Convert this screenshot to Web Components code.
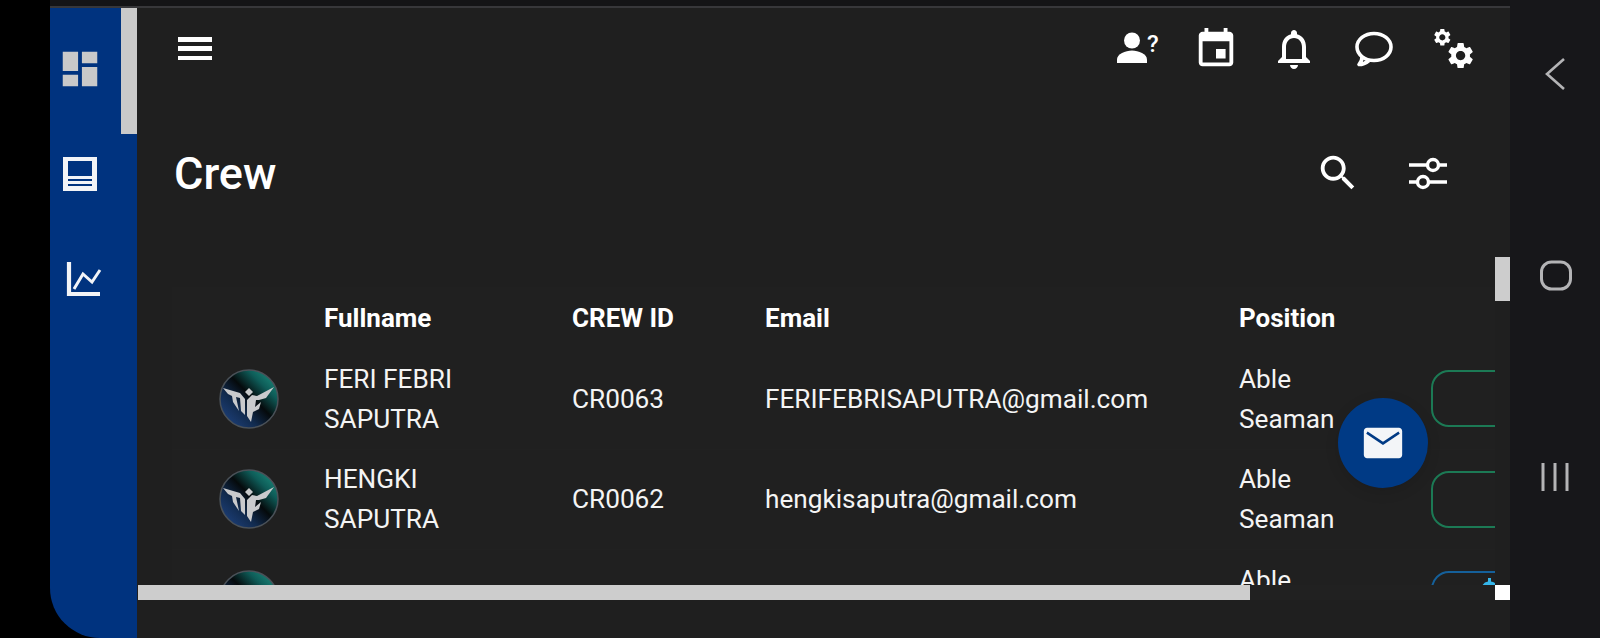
<!DOCTYPE html>
<html>
<head>
<meta charset="utf-8">
<title>Crew</title>
<style>
  html, body { margin: 0; height: 638px; overflow: hidden; background: #000; }
  body { display: flex; font-family: Roboto, "Liberation Sans", sans-serif; color: #fff; }
</style>
</head>
<body>
<app-frame>
  <side-rail slot="rail"></side-rail>
  <top-bar></top-bar>
  <page-title>Crew</page-title>
  <crew-table>
    <crew-row name="FERI FEBRI SAPUTRA" crew="CR0063" email="FERIFEBRISAPUTRA@gmail.com" position="Able Seaman"></crew-row>
    <crew-row name="HENGKI SAPUTRA" crew="CR0062" email="hengkisaputra@gmail.com" position="Able Seaman"></crew-row>
    <crew-row name="" crew="" email="" position="Able Seaman" tone="blue"></crew-row>
  </crew-table>
  <mail-fab slot="over"></mail-fab>
</app-frame>
<phone-nav></phone-nav>

<script>
const ICONS = {
  dashboard: '<path d="M3 13h8V3H3v10zm0 8h8v-6H3v6zm10 0h8V11h-8v10zm0-18v6h8V3h-8z"/>',
  event: '<path d="M17 12h-5v5h5v-5zM16 1v2H8V1H6v2H5c-1.11 0-1.99.9-1.99 2L3 19c0 1.1.89 2 2 2h14c1.1 0 2-.9 2-2V5c0-1.1-.9-2-2-2h-1V1h-2zm3 18H5V8h14v11z"/>',
  bell: '<path d="M12 22c1.1 0 2-.9 2-2h-4c0 1.1.9 2 2 2zm6-6v-5c0-3.07-1.63-5.64-4.5-6.32V4c0-.83-.67-1.5-1.5-1.5s-1.5.67-1.5 1.5v.68C7.64 5.36 6 7.92 6 11v5l-2 2v1h16v-1l-2-2zm-2 1H8v-6c0-2.48 1.51-4.5 4-4.5s4 2.02 4 4.5v6z"/>',
  search: '<path d="M15.5 14h-.79l-.28-.27C15.41 12.59 16 11.11 16 9.5 16 5.91 13.09 3 9.5 3S3 5.91 3 9.5 5.91 16 9.5 16c1.61 0 3.09-.59 4.23-1.57l.27.28v.79l5 4.99L20.49 19l-4.99-5zm-6 0C7.01 14 5 11.99 5 9.5S7.01 5 9.5 5 14 7.01 14 9.5 11.99 14 9.5 14z"/>'
};
const GEAR = 'M19.14 12.94c.04-.3.06-.61.06-.94 0-.32-.02-.64-.07-.94l2.03-1.58c.18-.14.23-.41.12-.61l-1.92-3.32c-.12-.22-.37-.29-.59-.22l-2.39.96c-.5-.38-1.03-.7-1.62-.94l-.36-2.54c-.04-.24-.24-.41-.48-.41h-3.84c-.24 0-.43.17-.47.41l-.36 2.54c-.59.24-1.13.57-1.62.94l-2.39-.96c-.22-.08-.47 0-.59.22L2.74 8.87c-.12.21-.08.47.12.61l2.03 1.58c-.05.3-.09.63-.09.94s.02.64.07.94l-2.03 1.58c-.18.14-.23.41-.12.61l1.92 3.32c.12.22.37.29.59.22l2.39-.96c.5.38 1.03.7 1.62.94l.36 2.54c.05.24.24.41.48.41h3.84c.24 0 .44-.17.47-.41l.36-2.54c.59-.24 1.13-.56 1.62-.94l2.39.96c.22.08.47 0 .59-.22l1.92-3.32c.12-.22.07-.47-.12-.61l-2.01-1.58zM12 15.6c-1.98 0-3.6-1.62-3.6-3.6s1.62-3.6 3.6-3.6 3.6 1.62 3.6 3.6-1.62 3.6-3.6 3.6z';

function icon(name, size, colour) {
  return `<svg width="${size}" height="${size}" viewBox="0 0 24 24" fill="${colour || '#fff'}">${ICONS[name]}</svg>`;
}

class AppFrame extends HTMLElement {
  constructor() {
    super();
    this.root = this.attachShadow({mode: 'open'});
    this.root.innerHTML = `
    <style>
      :host { display: flex; flex-direction: column; width: 1460px; margin-left: 50px; height: 638px; position: relative; }
      .strip { height: 6px; background: #141416; border-bottom: 2px solid #37373a; flex: none; }
      .body { flex: 1; display: flex; min-height: 0; }
      main { flex: 1; background: #1f1f1f; display: flex; flex-direction: column; min-width: 0; position: relative; }
      .hbar { position: absolute; left: 1px; right: 0; top: 577px; height: 15px; background: #212121; }
      .hbar i { position: absolute; left: 0; top: 0; width: 1112px; height: 15px; background: #cdcdcd; }
      .hbar b { position: absolute; right: 0; top: 0; width: 15px; height: 15px; background: #fff; }
      .vbar { position: absolute; right: 0; top: 249px; width: 15px; height: 44px; background: #cdcdcd; }
    </style>
    <div class="strip"></div>
    <div class="body">
      <slot name="rail"></slot>
      <main>
        <slot></slot>
        <div class="vbar"></div>
        <div class="hbar"><i></i><b></b></div>
        <slot name="over"></slot>
      </main>
    </div>`;
  }
}

class SideRail extends HTMLElement {
  constructor() {
    super();
    this.root = this.attachShadow({mode: 'open'});
    this.root.innerHTML = `
    <style>
      :host { display: flex; flex-direction: column; align-items: flex-start; width: 87px; flex: none; background: #00337f; border-bottom-left-radius: 50px; position: relative; padding: 38px 0 0 7px; box-sizing: border-box; }
      svg { display: block; }
      .thumb { position: absolute; left: 71px; top: 0; width: 16px; height: 126px; background: #cacaca; }
    </style>
    ${icon('dashboard', 46, '#c9c9c9')}
    <svg width="46" height="46" viewBox="0 0 46 46" style="margin-top:59px">
      <path fill="#f2f4f7" fill-rule="evenodd" d="M6 6h34v34H6zM11 10v15h24V10zM11 28v2h24v-2zM11 33v2h24v-2z"/>
    </svg>
    <svg width="46" height="46" viewBox="0 0 46 46" style="margin-top:59px" fill="none" stroke="#f2f4f7" stroke-width="4.2">
      <path d="M12 6v32h31"/>
      <path d="M17 33l9-15 9 8 8-12" stroke-width="3"/>
    </svg>
    <div class="thumb"></div>`;
  }
}

class TopBar extends HTMLElement {
  constructor() {
    super();
    this.root = this.attachShadow({mode: 'open'});
    this.root.innerHTML = `
    <style>
      :host { display: flex; align-items: flex-start; justify-content: space-between; height: 102px; padding: 29px 17px 0 41px; box-sizing: border-box; flex: none; }
      .burger { display: flex; flex-direction: column; gap: 4.750px; width: 34px; }
      .burger span { height: 4.500px; background: #fff; display: block; }
      .tools { display: flex; align-items: flex-start; margin-top: -19px; }
      .tools > div { width: 78px; height: 62px; display: flex; align-items: center; justify-content: center; }
      .tools > .pad { margin-right: 2px; }
      .tools > .who svg { margin-left: 4px; }
      svg { display: block; }
      text { font-family: Roboto, "Liberation Sans", sans-serif; }
    </style>
    <div class="burger"><span></span><span></span><span></span></div>
    <div class="tools">
      <div class="who">
        <svg width="46" height="36" viewBox="0 0 46 36" fill="#fff">
          <circle cx="15" cy="9.500" r="8"/>
          <path d="M0 32v-3.500c0-5.500 8.400-9 15-9s15 3.500 15 9V32z"/>
          <text x="30" y="21" font-size="24" font-weight="500" fill="#fff">?</text>
        </svg>
      </div>
      <div>${icon('event', 46)}</div>
      <div class="pad">${icon('bell', 48)}</div>
      <div class="pad">
        <svg width="44" height="38" viewBox="0 0 44 38" fill="none" stroke="#fff" stroke-width="3.600">
          <ellipse cx="22" cy="17" rx="17" ry="13.500"/>
          <path d="M10 27c0 3-1 5.500-3 7.500 4 0 7-1.500 10-4" stroke-linejoin="round"/>
        </svg>
      </div>
      <div>
        <svg width="44" height="44" viewBox="0 0 44 44" fill="#fff">
          <g transform="scale(.86)"><path d="${GEAR}"/></g>
          <g transform="translate(13 13) scale(1.300)"><path d="${GEAR}"/></g>
        </svg>
      </div>
    </div>`;
  }
}

class PageTitle extends HTMLElement {
  constructor() {
    super();
    this.root = this.attachShadow({mode: 'open'});
    this.root.innerHTML = `
    <style>
      :host { display: flex; align-items: center; justify-content: space-between; height: 177px; padding: 0 62px 49px 37px; box-sizing: border-box; flex: none; }
      h1 { margin: 0; font: 500 45px/50px Roboto, "Liberation Sans", sans-serif; color: #fff; }
      .tools { display: flex; align-items: center; gap: 47px; margin-top: -3px; }
      svg { display: block; }
    </style>
    <h1><slot></slot></h1>
    <div class="tools">
      ${icon('search', 46)}
      <svg width="40" height="36" viewBox="0 0 40 36" fill="none" stroke="#fff" stroke-width="3.400">
        <path d="M1 10h19M30 10h9M1 27h9M20 27h19"/>
        <circle cx="25" cy="10" r="5.500"/>
        <circle cx="15" cy="27" r="5.500"/>
      </svg>
    </div>`;
  }
}

class CrewTable extends HTMLElement {
  constructor() {
    super();
    this.root = this.attachShadow({mode: 'open'});
    this.root.innerHTML = `
    <style>
      :host { display: block; margin-left: 35px; width: 1323px; height: 298px; overflow: hidden; background: #202020; flex: none;
        --crew-cols: 152px 248px 193px 474px 192px 200px; }
      header { display: grid; grid-template-columns: var(--crew-cols); height: 62px; align-items: center; font: 700 26px/30px Roboto, "Liberation Sans", sans-serif; }
      header span { white-space: nowrap; }
    </style>
    <header><span></span><span>Fullname</span><span>CREW ID</span><span>Email</span><span>Position</span></header>
    <slot></slot>`;
  }
}

class CrewRow extends HTMLElement {
  constructor() {
    super();
    this.root = this.attachShadow({mode: 'open'});
  }
  connectedCallback() {
    const a = n => this.getAttribute(n) || '';
    const blue = a('tone') === 'blue';
    this.root.innerHTML = `
    <style>
      :host { display: grid; grid-template-columns: var(--crew-cols); height: 100.500px; align-items: center; font: 400 26.200px/40px Roboto, "Liberation Sans", sans-serif; color: #f4f4f4; border-bottom: 1px solid #212121; box-sizing: border-box; }
      .avatar { margin-left: 47px; width: 60px; height: 60px; display: block; }
      .name { max-width: 170px; }
      .pos { max-width: 110px; }
      .chip { width: 200px; height: 57px; box-sizing: border-box; border: 2px solid ${blue ? '#15609a' : '#1c7a55'}; border-radius: 18px; display: flex; padding: 5px 0 0 49px; }
      .chip svg { display: ${blue ? 'block' : 'none'}; }
    </style>
    <svg class="avatar" viewBox="0 0 60 60">
      <defs>
        <linearGradient id="g" x1="0.1" y1="0.9" x2="0.9" y2="0.1">
          <stop offset="0" stop-color="#1d3f78"/><stop offset=".3" stop-color="#112a4d"/>
          <stop offset=".55" stop-color="#050a0c"/><stop offset=".8" stop-color="#0e5c58"/><stop offset="1" stop-color="#1a8577"/>
        </linearGradient>
      </defs>
      <circle cx="30" cy="30" r="29" fill="url(#g)" stroke="#4a5158" stroke-width="1.500"/>
      <g fill="#c9cacc">
        <path d="M4 19 21 24 26 30V46L22 42 21 29 17 28 20 42 14 33 13 27 9 25z"/>
        <path d="M30 19 34 23 30 27 26 23z"/>
        <path d="M55 18 47 29 40 31 37 31 36 38 42 33 40 40 34 43 32 53 28 47V31L33 26 38 27z"/>
      </g>
    </svg>
    <div class="name">${a('name')}</div>
    <div>${a('crew')}</div>
    <div>${a('email')}</div>
    <div class="pos">${a('position')}</div>
    <div class="chip"><svg width="16" height="14" viewBox="0 0 16 14"><path fill="#35b6ea" d="M0 8Q2 4 6 3.500V0h3v3.500Q13 4 16 8v6H0z"/></svg></div>`;
  }
}

class MailFab extends HTMLElement {
  constructor() {
    super();
    this.root = this.attachShadow({mode: 'open'});
    this.root.innerHTML = `
    <style>
      :host { position: absolute; left: 1201px; top: 390px; width: 90px; height: 90px; border-radius: 50%; background: #003a85; box-shadow: 0 4px 14px rgba(0,0,0,.12); display: flex; align-items: center; justify-content: center; }
      svg { display: block; }
    </style>
    <svg width="46" height="46" viewBox="0 0 24 24"><path fill="#f3f5f8" d="M20.300 4H3.700C2.800 4 2 4.800 2 5.700v12.600c0 .9.800 1.700 1.700 1.700h16.600c.9 0 1.700-.8 1.700-1.700V5.700c0-.9-.8-1.700-1.700-1.700z"/><path fill="none" stroke="#003a85" stroke-width="1.300" d="M3.600 6.600l8.400 5.600 8.400-5.600"/></svg>`;
  }
}

class PhoneNav extends HTMLElement {
  constructor() {
    super();
    this.root = this.attachShadow({mode: 'open'});
    this.root.innerHTML = `
    <style>
      :host { display: flex; flex-direction: column; align-items: center; width: 90px; height: 638px; background: #17171a; flex: none; }
      svg { display: block; }
    </style>
    <svg width="90" height="638" viewBox="0 0 90 638" fill="none" stroke="#b4b4b6" stroke-width="3">
      <path d="M54 59L37 74l17 15" stroke-width="2.600"/>
      <rect x="31.500" y="262" width="29" height="27" rx="10"/>
      <path d="M33 463v28M45 463v28M57 463v28"/>
    </svg>`;
  }
}

customElements.define('app-frame', AppFrame);
customElements.define('side-rail', SideRail);
customElements.define('top-bar', TopBar);
customElements.define('page-title', PageTitle);
customElements.define('crew-table', CrewTable);
customElements.define('crew-row', CrewRow);
customElements.define('mail-fab', MailFab);
customElements.define('phone-nav', PhoneNav);
</script>
</body>
</html>
